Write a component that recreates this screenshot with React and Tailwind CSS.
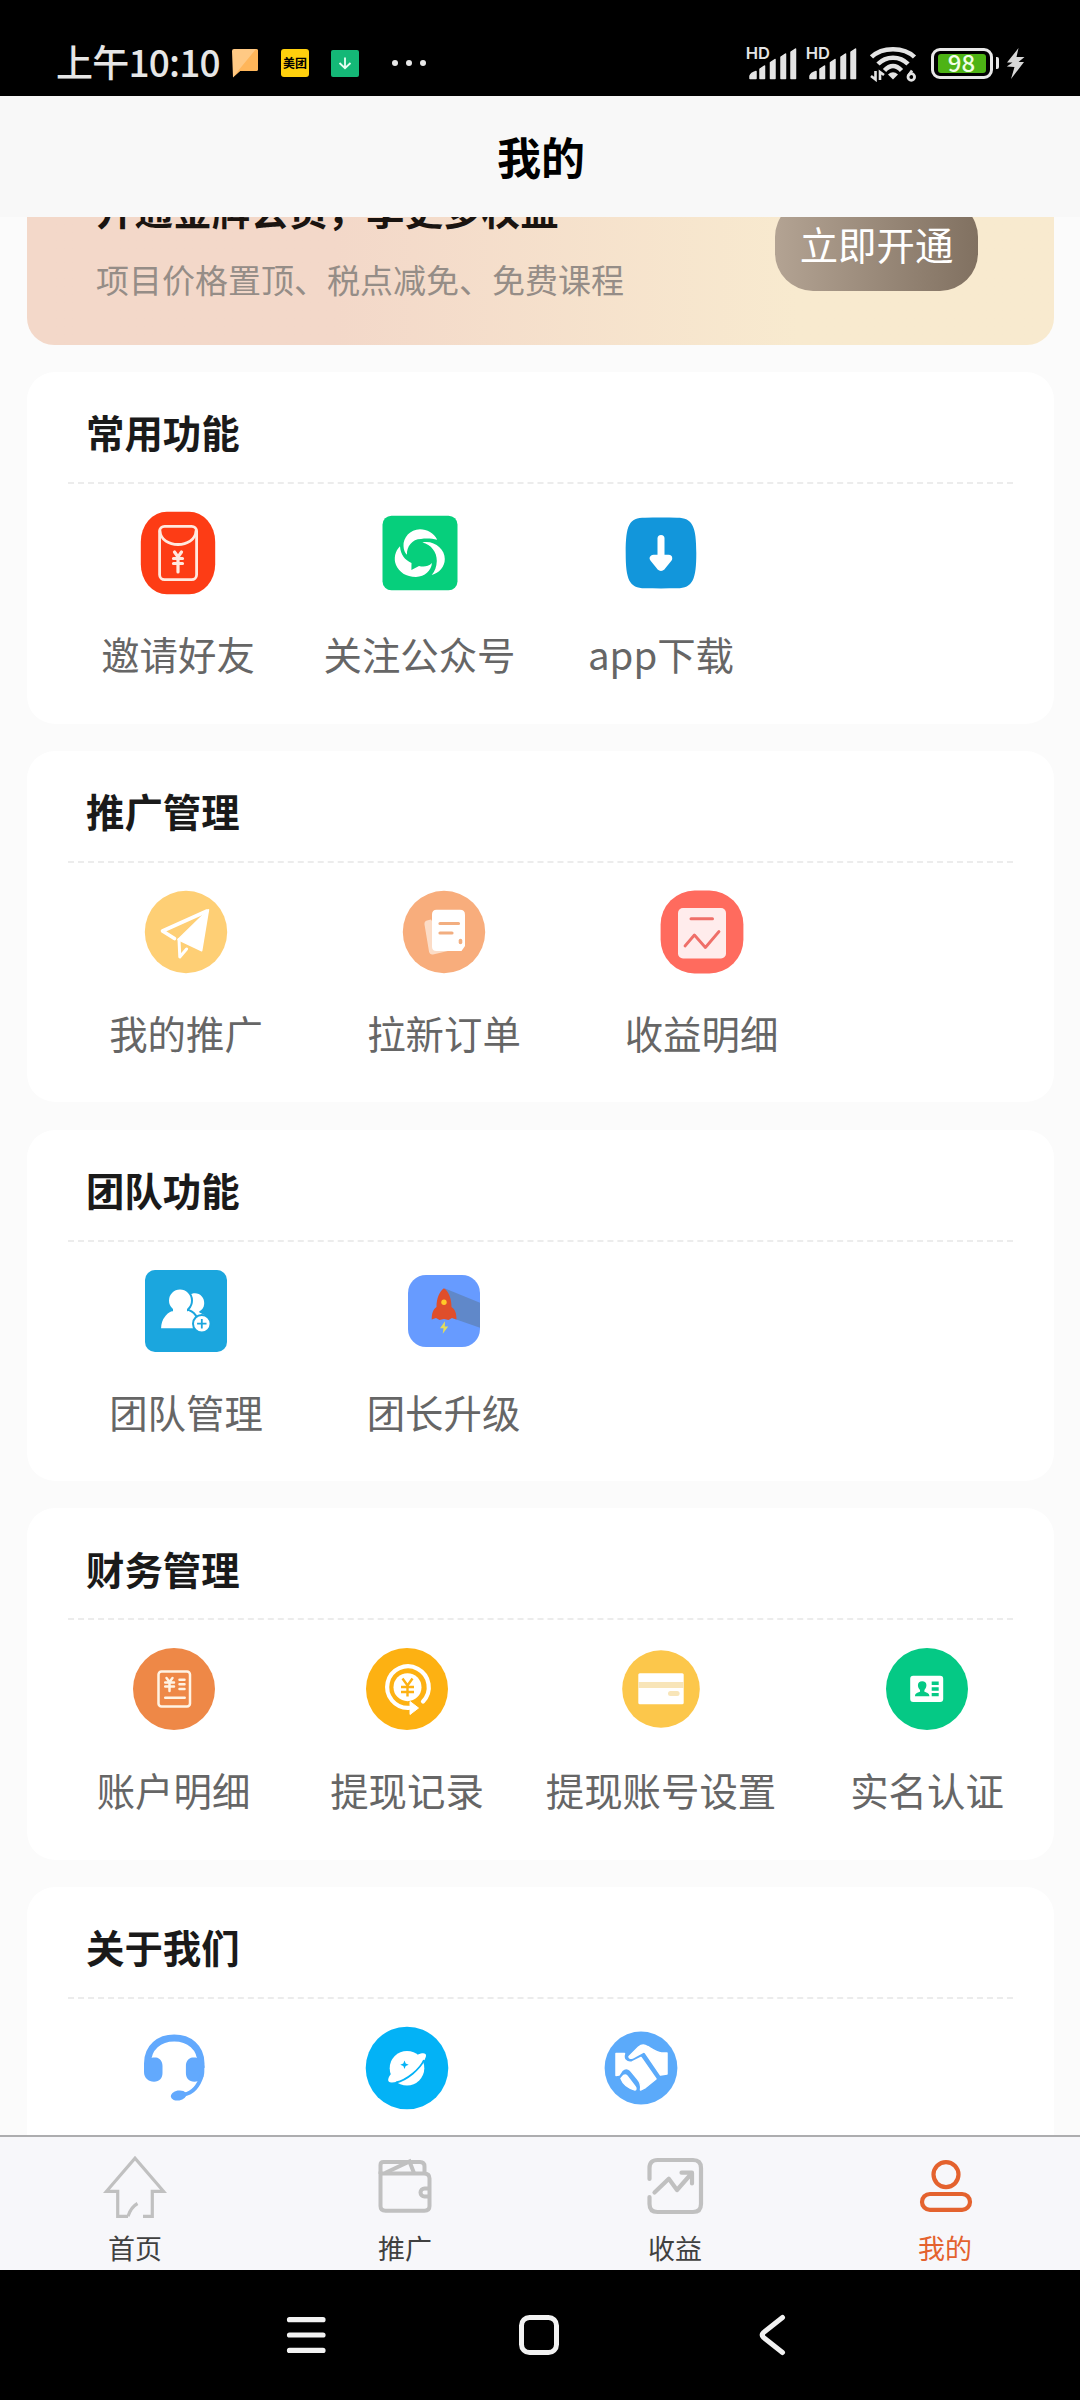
import React from 'react';

/* ---------- status bar ---------- */

function Signal() {
  return (
    <svg width="56" height="52" viewBox="-4 -8 56 52" fill="#e4e4e4">
      <text x="-1.300" y="14" fontSize="16.5" fontWeight="600" fontFamily="Inter, sans-serif">HD</text>
      <path d="M3 33.500V31q1-3 6-4.500v7zM13 33.500V24l4.500-3V33.500zM23.500 33.500V17.500l4.500-3V33.500zM34 33.500V12l4.500-3V33.500zM44 33.500V7l4.500-3V33.500z" stroke="#e4e4e4" strokeWidth="1.500" strokeLinejoin="round" />
    </svg>
  );
}

function StatusBar() {
  return (
    <div className="flex h-24 shrink-0 items-center bg-black pt-[30px] pl-14 text-[#e6e6e6]">
      <span className="w-[176px] pb-[3px] whitespace-nowrap text-[37px] leading-none font-medium tracking-[-0.8px]">上午10:10</span>
      <svg width="26" height="30" viewBox="0 0 26 30">
        <path d="M2 1h22q2 0 2 2v18q0 2-2 2H8L1 29.500 0 3q0-2 2-2z" fill="#ffc984" />
        <path d="M26 3v18q0 2-2 2H8L1 29 24 1q2 0 2 2z" fill="#ffb65a" />
      </svg>
      <div className="ml-[23px] flex h-7 w-7 items-center justify-center rounded-[3px] bg-[#ffd00d] text-xs leading-none font-bold text-black">
        <span className="whitespace-nowrap">美团</span>
      </div>
      <div className="ml-[22px] flex h-[27px] w-7 items-center justify-center rounded-[2px] bg-[#14b877]">
        <svg width="14" height="14" viewBox="0 0 14 14" fill="none" stroke="#e8fff4" strokeWidth="1.8">
          <path d="M7 1.500V12M1.500 7 7 12.200 12.500 7" />
        </svg>
      </div>
      <svg className="ml-[32px]" width="36" height="8" viewBox="0 0 36 8" fill="#e8e8e8">
        <circle cx="4" cy="4" r="3" />
        <circle cx="18" cy="4" r="3" />
        <circle cx="32" cy="4" r="3" />
      </svg>
      <div className="ml-auto flex items-center pr-[55px]">
        <Signal />
        <div className="ml-1">
          <Signal />
        </div>
        <svg className="ml-[11px]" width="47" height="38" viewBox="0 0 47 38" fill="none" stroke="#e4e4e4">
          <path d="M1.500 13C12 2.500 34 2.500 44.500 13" strokeWidth="4.500" />
          <path d="M8 20C16 11.500 30 11.500 38 20" strokeWidth="4.500" />
          <path d="M14.500 26.500C20 20.500 26 20.500 31.500 26.500" strokeWidth="4.500" />
          <path d="M18 30.500q5-4.500 10 0l-5 5z" fill="#e4e4e4" stroke="none" />
          <path d="M5.500 27v8.500L1 32M10 36v-8l4 3" strokeWidth="2.600" />
          <path d="M42 26.500l-3.500 5" strokeWidth="2.800" />
          <circle cx="41.300" cy="33" r="3.300" strokeWidth="2.800" />
        </svg>
        <div className="ml-3.5 flex h-[31px] w-[62px] items-center justify-center rounded-[9px] border-3 border-[#e8e8e8]">
          <div className="flex h-[19px] w-12 items-center justify-center rounded-[3px] bg-[#4db315] pb-[2px] text-[24px] leading-none font-medium text-[#f2ffe8]">98</div>
        </div>
        <div className="ml-[3px] h-3 w-[3.500px] rounded-r-[2px] bg-[#e8e8e8]" />
        <svg className="ml-[7px]" width="19" height="31" viewBox="0 0 19 31" fill="#d8d8d8">
          <path d="M12.500 0 1 14.500h5.500L.8 18.500 8.500 19 5 31 18 14h-5.500l6-5H10.500z" />
        </svg>
      </div>
    </div>
  );
}

/* ---------- feature icons, all on an 84 x 84 grid ---------- */

function Icon({ children }) {
  return (
    <svg width="84" height="84" viewBox="0 0 84 84" fill="none">
      {children}
    </svg>
  );
}

const InviteIcon = () => (
  <Icon>
    <rect x="4.800" y="0.700" width="74.400" height="82.600" rx="26" ry="30" fill="#fd3c15" />
    <g stroke="#ffe9df" strokeWidth="2.800" strokeLinecap="round">
      <rect x="23.600" y="15.300" width="37" height="53.400" rx="5" />
      <path d="M24 20c1 18 35 18 36 0" />
      <path d="M38.500 41l3.500 5 3.500-5M42 46v15M37.500 47.500h9M37.500 52.500h9" strokeWidth="3.200" />
    </g>
  </Icon>
);

const WechatIcon = () => (
  <Icon>
    <rect x="4.500" y="4.700" width="75" height="74.600" rx="9" fill="#06cf7c" />
    <g fill="#fff">
      <path d="M59.200 28.700C56 22 49 18.300 42 18.300 32 18.300 25 27 25.500 35c.1 4 1.500 7 3.500 8.700C28.500 36 34 28 43 28c6-1 11-.3 16.200.7z" />
      <path d="M44.400 31.500C56 29 67 38 66.800 48c0 8-5.800 14-13.100 16C57 60 58.500 56 58.800 50 59 41 53 33.500 44.400 31.500z" />
      <path d="M22 35.300C17 40 15.500 48 18 54c3 7 10 12 20 12 9-.5 15-6 16-14-4 4-9 4-13 3l-7.600 4 .1-7C27 49 22.500 44 22 35.300z" />
    </g>
  </Icon>
);

const DownloadIcon = () => (
  <Icon>
    <path d="M6.700 42C6.700 14 10 6.700 26 6.700 36 6.500 48 6.500 58 6.700 74 6.700 77.300 16 77.300 42S74 77.300 58 77.300c-10 .2-22 .2-32 0C10 77.300 6.700 68 6.700 42z" fill="#1296db" />
    <path d="M42 27.500V48" stroke="#fff" strokeWidth="7" strokeLinecap="round" />
    <path d="M34.500 47.500h15L43 55.500q-1 1-2 0z" fill="#fff" stroke="#fff" strokeWidth="7.500" strokeLinejoin="round" />
  </Icon>
);

const PlaneIcon = () => (
  <Icon>
    <circle cx="42" cy="42" r="41.200" fill="#fecf75" />
    <path d="M63 21 18.500 41l12 7.500" stroke="#fff" strokeWidth="3.600" strokeLinejoin="round" strokeLinecap="round" />
    <path d="M64.500 19.700 57.700 60.700 34 49.500z" fill="#fff" stroke="#fff" strokeWidth="1.500" strokeLinejoin="round" />
    <path d="M35 49.500l.8 17.500 6.800-8" stroke="#fff" strokeWidth="3" strokeLinejoin="round" strokeLinecap="round" />
  </Icon>
);

const OrderIcon = () => (
  <Icon>
    <circle cx="42" cy="42" r="41.200" fill="#f8ad7c" />
    <path d="M29 29.500l-4 1q-3 .8-2.500 4l4.500 27q.8 3.500 4 3l17-4z" fill="#fcdcc6" />
    <path d="M34.500 19.700H58q5 0 5 5V56l-3.500 5H34.500q-4.500 0-4.500-4.500v-32q0-4.800 4.500-4.800z" fill="#fff" />
    <path d="M38 33.500h18.500M38 43h12" stroke="#f2ae80" strokeWidth="3.200" strokeLinecap="round" />
    <path d="M58.500 50.500v2" stroke="#f2ae80" strokeWidth="3.600" strokeLinecap="round" />
  </Icon>
);

const IncomeIcon = () => (
  <Icon>
    <rect x="0.600" y="0.600" width="82.800" height="82.800" rx="34" fill="#ff6b5e" />
    <rect x="18" y="18" width="48" height="50.500" rx="5" fill="#ffecec" />
    <path d="M31 28.800h21.500" stroke="#ef6f69" strokeWidth="3" strokeLinecap="round" />
    <path d="M25 56l9.400-11L45.400 57.500 59 41.500" stroke="#ef6f69" strokeWidth="2.800" strokeLinecap="round" strokeLinejoin="round" />
  </Icon>
);

const TeamIcon = () => (
  <Icon>
    <rect x="1" y="1" width="82" height="82" rx="10" fill="#1ba6de" />
    <path d="M45 26c8-5 16 1 15.200 9-.3 4-2.500 6-5 7.500-1.500 1.500 8 3 9 7.500L58 54H44V30z" fill="#fff" />
    <path d="M16 60.200c0-12 8-19 15-19.600 3 1.500 8 1.500 11 0 8 1 13.500 8 13.500 19.600z" fill="#fff" stroke="#1ba6de" strokeWidth="2" />
    <circle cx="36" cy="31.500" r="12" fill="#fff" stroke="#1ba6de" strokeWidth="2" />
    <path d="M29 37h14v8H29z" fill="#fff" />
    <circle cx="57.800" cy="54.700" r="8.800" fill="#fff" stroke="#1ba6de" strokeWidth="2" />
    <path d="M57.800 50v9.400M53.100 54.700h9.400" stroke="#1ba6de" strokeWidth="1.800" />
  </Icon>
);

const RocketIcon = () => (
  <Icon>
    <rect x="6" y="6" width="72" height="72" rx="18" fill="#679bff" />
    <path d="M43 19.500 78 33.700v25L50 49z" fill="#6088c9" />
    <path d="M42 19.300c4.500 3 7.500 10 7.500 18.700 3.500 2.500 5 6 5 12.500l-4.500-1.500-3.500 2-4.500-1-4.500 1-3.500-2-4.300 1.500c0-6.500 1.500-10 4.800-12.500 0-8.700 3-15.700 7.500-18.700z" fill="#df4e2b" />
    <circle cx="42" cy="33.300" r="2.700" fill="#ffc928" />
    <path d="M43 52.300l-5 7h3.500l-.8 5.400 5.500-7.200h-3.400z" fill="#e3dc5b" />
  </Icon>
);

const AccountIcon = () => (
  <Icon>
    <circle cx="42" cy="42" r="41" fill="#ee8847" />
    <g stroke="#fff3e4" strokeWidth="2.500" strokeLinecap="round">
      <rect x="26.500" y="24.500" width="31.500" height="35" rx="3" />
      <path d="M34.500 31l3 4 3-4M37.500 35v9M33.200 35.500h8.800M33.200 39.500h8.800M47.500 32.800h5M47.500 37.300h5M47.500 42h5M33.200 50.800h19.500" />
    </g>
  </Icon>
);

const RecordIcon = () => (
  <Icon>
    <circle cx="42" cy="42" r="41" fill="#fdb112" />
    <circle cx="42.500" cy="40.200" r="14" fill="#fff" />
    <path d="M37.500 31.500l5 7 5-7M42.500 38.500v11M36 40h13M36 45h13" stroke="#fdb112" strokeWidth="2.400" />
    <path d="M58 54.500A20.800 20.800 0 1 0 44 60.900" stroke="#fff" strokeWidth="4.200" strokeLinecap="round" />
    <path d="M45 54.500v13l8.500-6.500z" fill="#fff" stroke="#fff" strokeWidth="1" strokeLinejoin="round" />
  </Icon>
);

const BankCardIcon = () => (
  <Icon>
    <circle cx="42" cy="42" r="38.800" fill="#fcc74b" />
    <rect x="19.300" y="26.300" width="45.400" height="31" rx="1.500" fill="#fff" />
    <rect x="19.300" y="35" width="45.400" height="6" fill="#f8e5b8" />
    <rect x="49" y="44" width="11.600" height="5" rx="2.500" fill="#f8e5b8" />
  </Icon>
);

const RealNameIcon = () => (
  <Icon>
    <circle cx="42" cy="42" r="41" fill="#05c985" />
    <rect x="25.200" y="28.700" width="33" height="26.400" rx="3" fill="#fff" />
    <path d="M37.200 34.300c5.500 0 5 6.200 2.200 8.700v1.800c2.500 1 5 1.200 5 4.500H30c0-3.300 2.500-3.500 5-4.500V43c-2.800-2.500-3.300-8.700 2.200-8.700z" fill="#05c985" />
    <path d="M46.700 36.200h7M46.700 42h7M46.700 47.600h7" stroke="#05c985" strokeWidth="3.400" />
  </Icon>
);

const HeadsetIcon = () => (
  <Icon>
    <path d="M15.500 40V37.500C15.500 21 27.500 12 42.200 12S69 21 69 37.500V42" stroke="#62a9fd" strokeWidth="7" />
    <path d="M12 40c2-7 7-9 12-8.500 4 .5 6.500 4 6.500 8.500v7c0 5-3 8.700-8.500 8.700S12 52 12 46zM72.400 40c-2-7-7-9-12-8.500-4 .5-6.500 4-6.500 8.500v7c0 5 3 8.700 8.500 8.700s9.900-3.700 9.900-9.700z" fill="#62a9fd" />
    <path d="M70 49C67 59 61 67 52 68.500" stroke="#62a9fd" strokeWidth="4" />
    <ellipse cx="46.500" cy="69.500" rx="7.800" ry="5" transform="rotate(-10 46.500 69.500)" fill="#62a9fd" />
  </Icon>
);

const PlanetIcon = () => (
  <Icon>
    <circle cx="42" cy="42" r="41.300" fill="#03b2f6" />
    <circle cx="42" cy="42.200" r="17.300" fill="#fff" />
    <path d="M53 28.500C58 26.500 61.500 27 61 30c-1 8-22 27-34.500 26.500-4.500-.5-4-3.500-1-8z" fill="#fff" />
    <path d="M31 56.500C42 54 55 43 59 34" stroke="#03b2f6" strokeWidth="1.800" />
    <path d="M39.500 34.500l1.200 3 3 1.200-3 1.200-1.200 3-1.200-3-3-1.200 3-1.200z" fill="#03b2f6" />
  </Icon>
);

const HandshakeIcon = () => (
  <Icon>
    <circle cx="42" cy="42" r="36.400" fill="#5baafa" />
    <g fill="#fff" stroke="#fff" strokeWidth="1.500" strokeLinejoin="round">
      <path d="M17 27.500h8.500c-2 6 2 9.500 7.500 8.500l9-4.500L57 53 46.500 61.500 41.500 64c1-5 0-7.500-3-11l-7-8.500c-3-3-6-2.500-8.500 0L20 49l-3 .5z" />
      <path d="M30 30.500 39.500 21c3-2.500 6-2.500 9-.5 5 3 9 6 14 6.500h5.500V48l-6.500 1L46.500 27q-1.200-1.500-3-.5L33.500 32q-3.500 1-3.500-1.500z" />
      <path d="M22 52.500l2.800-3.200q1.700-1 3.200.7l8 10.500c1.500 2 1 3.500 0 3.500C29 62 24 58 22 52.500z" />
    </g>
  </Icon>
);

const sections = [
  {
    title: '常用功能',
    items: [
      { label: '邀请好友', icon: InviteIcon, width: 'w-[242px]' },
      { label: '关注公众号', icon: WechatIcon, width: 'w-[241px]' },
      { label: 'app下载', icon: DownloadIcon, width: 'w-[242px]' },
    ],
  },
  {
    title: '推广管理',
    items: [
      { label: '我的推广', icon: PlaneIcon, width: 'w-[258px]' },
      { label: '拉新订单', icon: OrderIcon, width: 'w-[258px]' },
      { label: '收益明细', icon: IncomeIcon, width: 'w-[257px]' },
    ],
  },
  {
    title: '团队功能',
    items: [
      { label: '团队管理', icon: TeamIcon, width: 'w-[258px]' },
      { label: '团长升级', icon: RocketIcon, width: 'w-[257px]' },
    ],
  },
  {
    title: '财务管理',
    items: [
      { label: '账户明细', icon: AccountIcon, width: 'w-[233px]' },
      { label: '提现记录', icon: RecordIcon, width: 'w-[234px]' },
      { label: '提现账号设置', icon: BankCardIcon, width: 'w-[274px]' },
      { label: '实名认证', icon: RealNameIcon, width: 'w-[258px]' },
    ],
  },
  {
    title: '关于我们',
    items: [
      { icon: HeadsetIcon, width: 'w-[233px]' },
      { icon: PlanetIcon, width: 'w-[234px]' },
      { icon: HandshakeIcon, width: 'w-[233px]' },
    ],
  },
];

function Banner() {
  return (
    <div className="flex h-[185px] shrink-0 items-start justify-between rounded-[27px] bg-linear-to-r from-[#f3d8c9] from-30% to-[#f8eacf] to-75% pt-[19px] pr-[76px] pl-[69px]">
      <div>
        <div className="text-[38.6px] leading-[58px] font-bold text-[#1a1410]">开通金牌会员，享更多权益</div>
        <div className="mt-[17px] text-[33px] leading-[50px] text-[#958d87]">项目价格置顶、税点减免、免费课程</div>
      </div>
      <div className="mt-5 flex h-[92px] w-[203px] items-center justify-center rounded-[38px] bg-linear-to-r from-[#b3a393] to-[#817161] pb-[3px] text-[38.4px] text-white">
        立即开通
      </div>
    </div>
  );
}

function Section({ title, items }) {
  return (
    <div className="h-[351.4px] shrink-0 rounded-[28px] bg-white">
      <div className="mx-[41px] flex h-28 items-center border-b-2 border-dashed border-[#ececec] pt-2.5 pl-[18px] text-[38.4px] font-bold text-[#1a1a1a]">
        {title}
      </div>
      <div className="mt-[27px] flex pl-[30px]">
        {items.map(({ label, icon: ItemIcon, width }, i) => (
          <div key={i} className={`flex shrink-0 flex-col items-center ${width}`}>
            <ItemIcon />
            {label && <span className="mt-[29px] text-[38.4px] leading-[58px] whitespace-nowrap text-[#666]">{label}</span>}
          </div>
        ))}
      </div>
    </div>
  );
}

/* ---------- tab bar ---------- */

const tabs = [
  {
    label: '首页',
    color: 'text-[#404040]',
    icon: (
      <g stroke="#c0c0c0" strokeWidth="3.200">
        <path d="M29 66.300H18.700V41.300H7.500L36 8.300 64.500 41.300H53.300V66.300H44M29 66.300C31 60 34 56 38.500 53.500" />
      </g>
    ),
  },
  {
    label: '推广',
    color: 'text-[#404040]',
    icon: (
      <g stroke="#c0c0c0" strokeWidth="4">
        <path d="M11.500 24V15q0-3 3-3H51q4.500 0 4.500 4.500V23" />
        <path d="M11.500 23.500H55q5.500 0 5.500 5V56q0 4.700-5 4.700H16.500q-5 0-5-4.700z" />
        <path d="M16 23 40.500 11.500 45 23M60 38.500H55.500a4 4 0 0 0 0 8H60" />
      </g>
    ),
  },
  {
    label: '收益',
    color: 'text-[#404040]',
    icon: (
      <g stroke="#c0c0c0" strokeWidth="4.200" strokeLinecap="round" strokeLinejoin="round">
        <path d="M10.500 29V18q0-8 8-8H54q8 0 8 8V54q0 8-8 8H18.500q-8 0-8-8V47" />
        <path d="M15.500 42.500 29.800 28.700 38 40 52.500 23.500M42.500 22.700H53V33.500" />
      </g>
    ),
  },
  {
    label: '我的',
    color: 'text-[#e4622e]',
    icon: (
      <g stroke="#e4622e" strokeWidth="4.200">
        <circle cx="37" cy="24.600" r="12.500" />
        <rect x="13" y="44" width="48" height="15.800" rx="7.900" />
      </g>
    ),
  },
];

function TabBar() {
  return (
    <div className="grid h-[135px] shrink-0 grid-cols-4 border-t-2 border-[#adadaf] bg-[#f7f7fa]">
      {tabs.map((tab) => (
        <div key={tab.label} className="flex flex-col items-center pt-[13px]">
          <svg width="72" height="72" viewBox="0 0 72 72" fill="none">
            {tab.icon}
          </svg>
          <span className={`mt-[8px] text-[27px] leading-9 ${tab.color}`}>{tab.label}</span>
        </div>
      ))}
    </div>
  );
}

function SystemNav() {
  return (
    <div className="flex h-[130px] shrink-0 items-center bg-black pl-[284px]">
      <svg width="44" height="44" viewBox="0 0 44 44" stroke="#f2f2f2" strokeWidth="5.200" strokeLinecap="round">
        <path d="M5.500 6.700h33.500M5.500 22h33.500M5.500 37.400h33.500" />
      </svg>
      <svg className="ml-[189px]" width="44" height="44" viewBox="0 0 44 44" fill="none" stroke="#f2f2f2" strokeWidth="5">
        <rect x="4.500" y="4.500" width="35" height="35" rx="8" />
      </svg>
      <svg className="ml-[190px]" width="44" height="44" viewBox="0 0 44 44" fill="none" stroke="#f2f2f2" strokeWidth="5" strokeLinecap="round">
        <path d="M31.500 4.500 12.500 19.500q-2.500 2.500 0 5L31.500 39.500" />
      </svg>
    </div>
  );
}

export default function App() {
  return (
    <div className="flex h-[2400px] w-[1080px] flex-col overflow-hidden bg-[#fbfbfb] font-['Noto_Sans_CJK_SC','Noto_Sans',sans-serif]">
      <StatusBar />
      <div className="flex h-[121px] shrink-0 items-center justify-center bg-[#f8f8f8] pb-[1px] pl-[2px] text-[44px] font-bold text-black">我的</div>
      <div className="flex min-h-0 flex-1 flex-col overflow-hidden">
        <div className="-mt-[57px] flex flex-col gap-[27.3px] pr-[26px] pl-[27px]">
          <Banner />
          {sections.map((section) => (
            <Section key={section.title} {...section} />
          ))}
        </div>
      </div>
      <TabBar />
      <SystemNav />
    </div>
  );
}
